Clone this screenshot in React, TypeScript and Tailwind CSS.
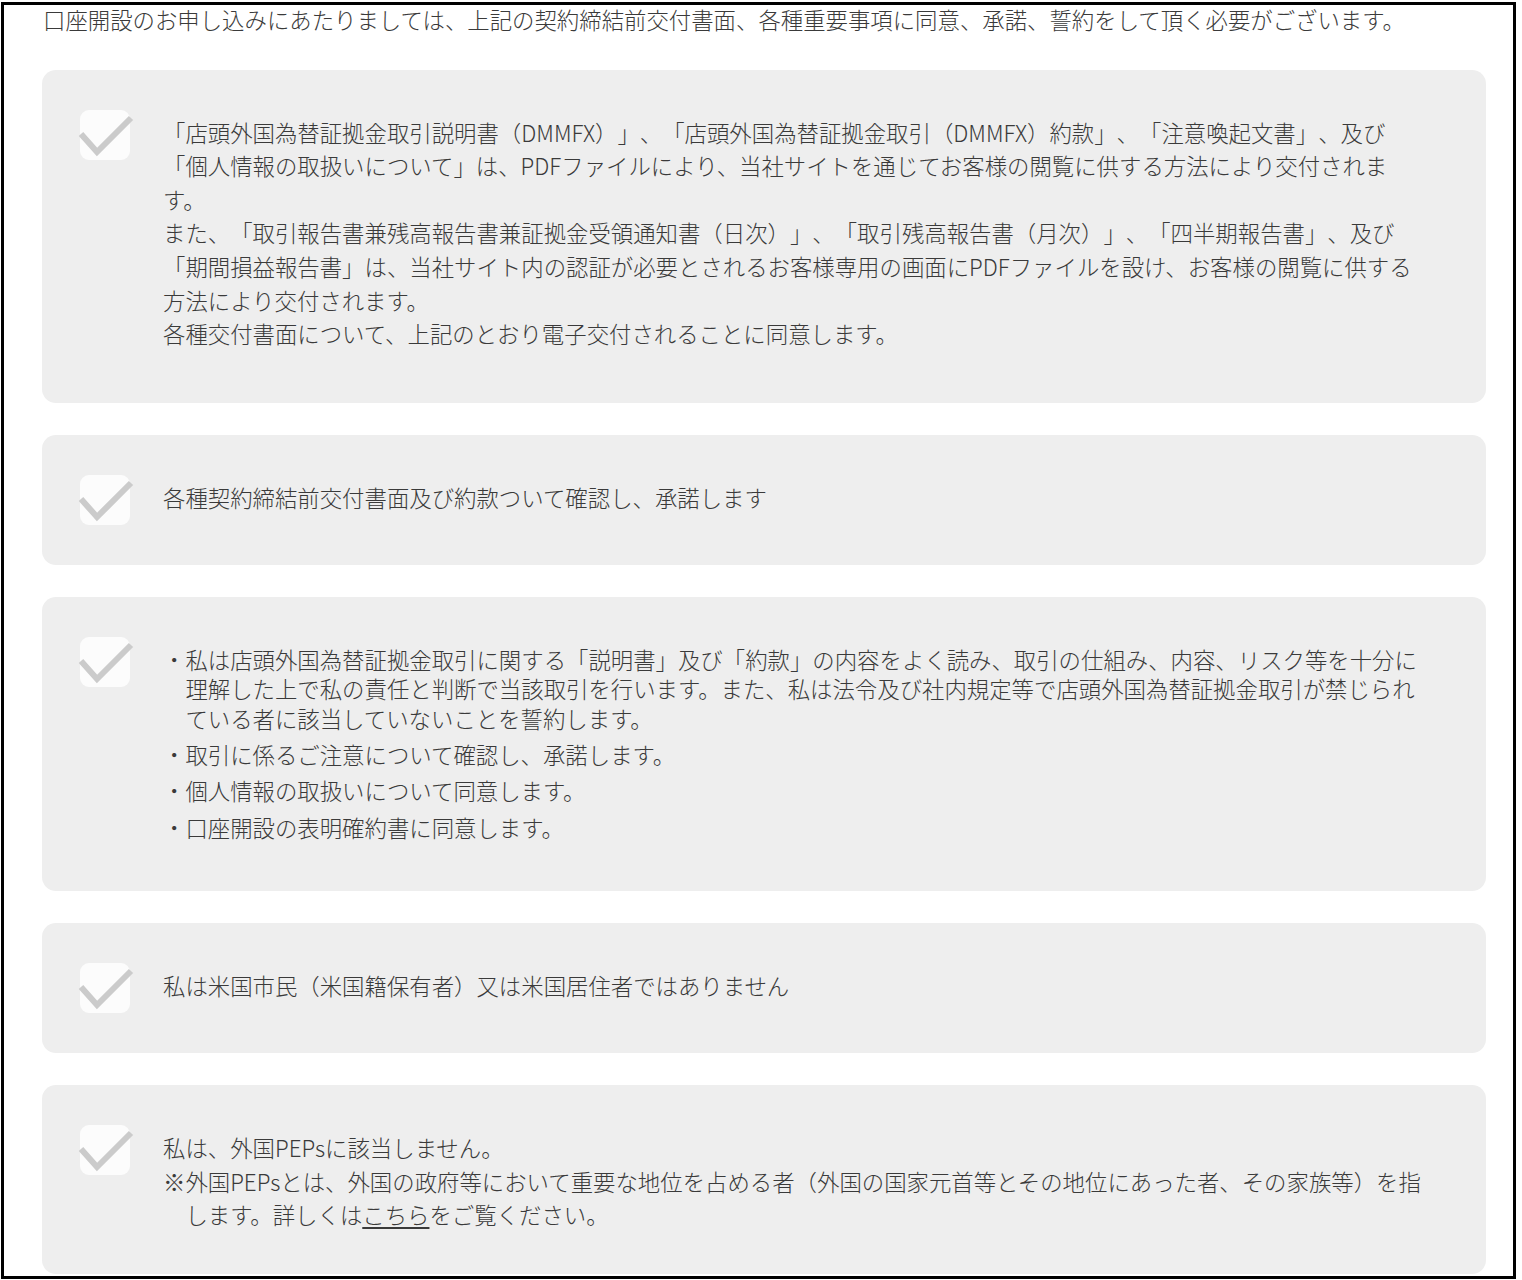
const Check = () => (
  <div className="relative mr-[33px] h-[50px] w-[50px] shrink-0 rounded-[9px] bg-[#fcfcfc]">
    <svg className="absolute inset-0 overflow-visible" width="50" height="50" viewBox="0 0 50 50" fill="none">
      <polyline points="1,24 17,42 51,8" stroke="#cbcbcb" strokeWidth="6" strokeLinecap="butt" strokeLinejoin="miter" />
    </svg>
  </div>
);

function Card({ children }: { children: React.ReactNode }) {
  return (
    <div className="flex rounded-[14px] bg-[#eeeeee] py-10 pl-[38px] pr-[40px]">
      <Check />
      {children}
    </div>
  );
}

export default function App() {
  return (
    <div className="h-[1280px] overflow-hidden bg-white pl-[1px] pt-[2px] font-['Noto_Sans_CJK_JP','Noto_Sans',sans-serif] font-light text-[#3a3a3a] [text-spacing-trim:space-all]">
      <div className="h-[1277px] w-[1515px] overflow-hidden border-[3px] border-black pl-[38px] pr-[27px]">
        <p className="-mt-[2px] mb-[33px] pl-[1px] text-[22.4px] leading-[33.6px] whitespace-nowrap">
          口座開設のお申し込みにあたりましては、上記の契約締結前交付書面、各種重要事項に同意、承諾、誓約をして頂く必要がございます。
        </p>

        <div className="flex flex-col gap-8">
          <Card>
            <div className="mt-[6px] flex-1 pb-[12px] text-[22.4px] leading-[33.6px]">
              <p>
                「店頭外国為替証拠金取引説明書（DMMFX）」、「店頭外国為替証拠金取引（DMMFX）約款」、「注意喚起文書」、及び
                <br />
                「個人情報の取扱いについて」は、PDFファイルにより、当社サイトを通じてお客様の閲覧に供する方法により交付されま
                <br />
                す。
              </p>
              <p>
                また、「取引報告書兼残高報告書兼証拠金受領通知書（日次）」、「取引残高報告書（月次）」、「四半期報告書」、及び
                <br />
                「期間損益報告書」は、当社サイト内の認証が必要とされるお客様専用の画面にPDFファイルを設け、お客様の閲覧に供する
                <br />
                方法により交付されます。
              </p>
              <p>各種交付書面について、上記のとおり電子交付されることに同意します。</p>
            </div>
          </Card>

          <Card>
            <p className="mt-[6px] flex-1 text-[22.4px] leading-[33.6px]">各種契約締結前交付書面及び約款ついて確認し、承諾します</p>
          </Card>

          <Card>
            <ul className="mt-[8px] flex-1 pb-[2px] text-[22.4px] leading-[29.4px]">
              <li className="mb-[7px] pl-[1em] -indent-[1em]">
                ・私は店頭外国為替証拠金取引に関する「説明書」及び「約款」の内容をよく読み、取引の仕組み、内容、リスク等を十分に
                <br />
                理解した上で私の責任と判断で当該取引を行います。また、私は法令及び社内規定等で店頭外国為替証拠金取引が禁じられ
                <br />
                ている者に該当していないことを誓約します。
              </li>
              <li className="mb-[7px] pl-[1em] -indent-[1em]">・取引に係るご注意について確認し、承諾します。</li>
              <li className="mb-[7px] pl-[1em] -indent-[1em]">・個人情報の取扱いについて同意します。</li>
              <li className="mb-[7px] pl-[1em] -indent-[1em]">・口座開設の表明確約書に同意します。</li>
            </ul>
          </Card>

          <Card>
            <p className="mt-[6px] flex-1 text-[22.4px] leading-[33.6px]">私は米国市民（米国籍保有者）又は米国居住者ではありません</p>
          </Card>

          <Card>
            <div className="mt-[6px] flex-1 pb-[2px] text-[22.4px] leading-[33.6px]">
              <p>私は、外国PEPsに該当しません。</p>
              <p className="pl-[1em] -indent-[1em]">
                ※外国PEPsとは、外国の政府等において重要な地位を占める者（外国の国家元首等とその地位にあった者、その家族等）を指
                <br />
                します。詳しくは<span className="underline underline-offset-[3px]">こちら</span>をご覧ください。
              </p>
            </div>
          </Card>
        </div>
      </div>
    </div>
  );
}
